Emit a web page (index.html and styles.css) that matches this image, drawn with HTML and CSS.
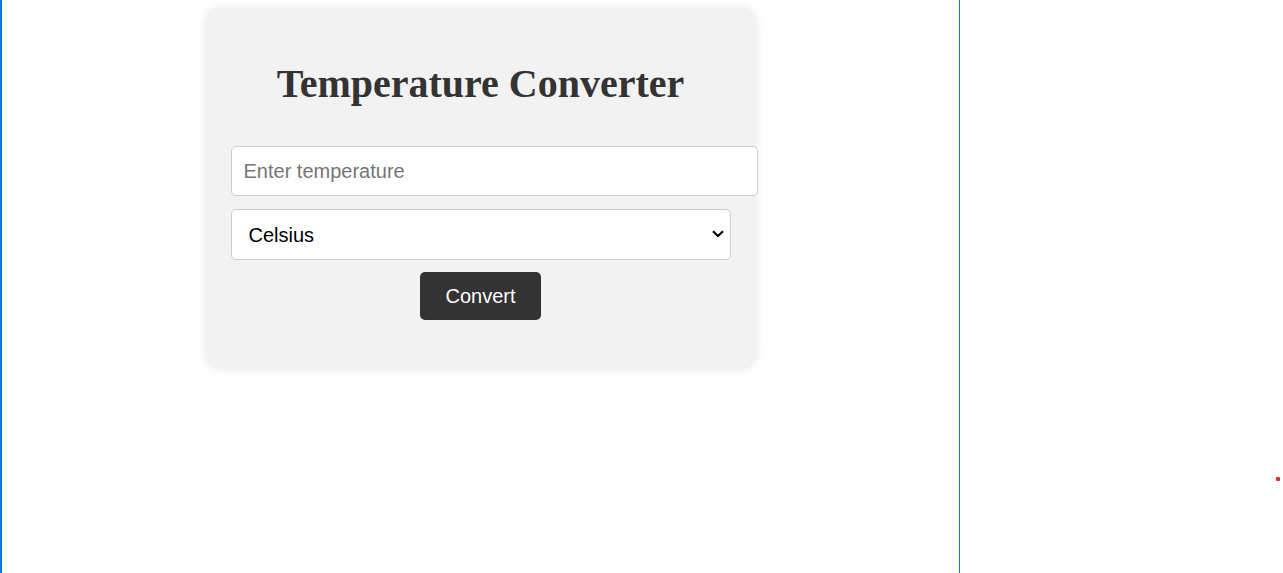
FILE: index.html
```html
<!DOCTYPE html>
<html lang="en">
<head>
<meta charset="utf-8">
<title>Temperature Converter</title>
<link rel="stylesheet" href="styles.css">
</head>
<body>
<div class="layout">
  <main class="pane">
    <div class="card">
      <h1 class="title">Temperature Converter</h1>
      <form class="form">
        <input class="field" type="text" placeholder="Enter temperature">
        <div class="select-wrap">
          <select class="unit">
            <option>Celsius</option>
            <option>Fahrenheit</option>
            <option>Kelvin</option>
          </select>
          <svg class="chev" width="12" height="8" viewBox="0 0 12 8" aria-hidden="true">
            <path d="M1 1.2 L6 6 L11 1.2" fill="none" stroke="#000" stroke-width="2.2" stroke-linecap="butt" stroke-linejoin="miter"/>
          </svg>
        </div>
        <button class="btn" type="button">Convert</button>
      </form>
    </div>
  </main>
  <aside class="side">
    <span class="dot"></span>
  </aside>
</div>
</body>
</html>
```

FILE: styles.css
```css
html, body {
  margin: 0;
  padding: 0;
  background: #ffffff;
  height: 100%;
}
.layout {
  display: flex;
  height: 573px;
  overflow: hidden;
}
.pane {
  width: 957px;
  flex: none;
  border-left: 2px solid #0a78d8;
  border-right: 1px solid #1a72d0;
  padding-top: 8px;
  box-sizing: content-box;
}
.card {
  width: 500px;
  margin: 0 auto;
  padding: 25px;
  background: #f2f2f2;
  border-radius: 15px;
  box-shadow: 0 0 10px rgba(0, 0, 0, 0.1);
  font-family: "Liberation Sans", Arial, sans-serif;
}
.title {
  margin: 28px 0 0;
  font-family: "Liberation Serif", "Times New Roman", serif;
  font-size: 40px;
  line-height: 46px;
  font-weight: bold;
  color: #333333;
  text-align: center;
}
.form {
  display: flex;
  flex-direction: column;
  align-items: flex-start;
  margin-top: 39px;
}
.field {
  box-sizing: border-box;
  width: 527px;
  height: 50px;
  padding: 0 12px;
  font-family: "Liberation Sans", Arial, sans-serif;
  font-size: 20px;
  color: #333;
  border: 1px solid #cccccc;
  border-radius: 5px;
  background: #ffffff;
  outline: none;
}
.field::placeholder {
  color: #757575;
}
.select-wrap {
  position: relative;
  margin-top: 13px;
  width: 500px;
  height: 51px;
}
.unit {
  -webkit-appearance: none;
  appearance: none;
  box-sizing: border-box;
  width: 500px;
  height: 51px;
  padding: 0 30px 0 17px;
  font-family: "Liberation Sans", Arial, sans-serif;
  font-size: 20px;
  color: #000000;
  border: 1px solid #cccccc;
  border-radius: 5px;
  background: #ffffff;
}
.chev {
  position: absolute;
  right: 7px;
  top: 21px;
  pointer-events: none;
}
.btn {
  align-self: center;
  box-sizing: border-box;
  width: 121px;
  height: 48px;
  margin: 12px 0 24px;
  padding: 0;
  font-family: "Liberation Sans", Arial, sans-serif;
  font-size: 20px;
  color: #ffffff;
  background: #333333;
  border: none;
  border-radius: 5px;
  cursor: pointer;
}
.side {
  flex: 1;
  position: relative;
}
.dot {
  position: absolute;
  left: 316px;
  top: 477px;
  width: 4px;
  height: 4px;
  border-radius: 1px;
  background: #e53030;
}
```
